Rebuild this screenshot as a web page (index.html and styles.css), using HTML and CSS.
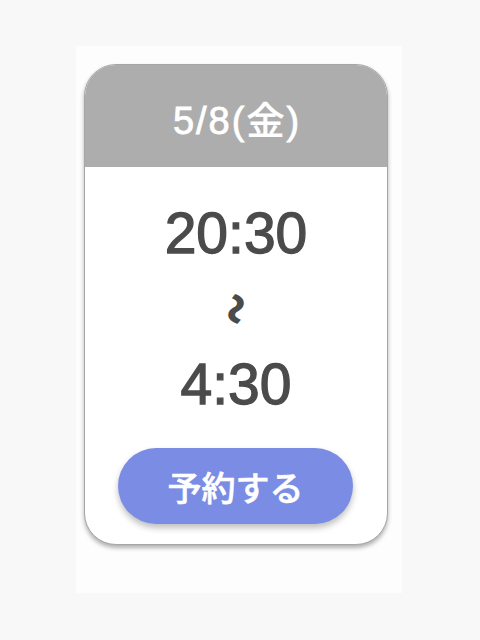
FILE: index.html
```html
<!DOCTYPE html>
<html lang="ja">
<head>
    <meta charset="UTF-8">
    <meta name="viewport" content="width=device-width, initial-scale=1.0">
    <link rel="stylesheet" href="styles.css">
    <title>予約</title>
</head>
<body>
    <!-- stage -->
    <div class="stage">
        <div class="card">
            <div class="cardHead">5/8(金)</div>
            <div class="cardBody">
                <div class="time">20:30</div>
                <div class="tilde"><span>〜</span></div>
                <div class="time">4:30</div>
                <button class="reserveButton">予約する</button>
            </div>
        </div>
    </div>
</body>
</html>
```

FILE: styles.css
```css
body {
    margin: 0;
    background-color: #f8f8f8;
    font-family: "Liberation Sans", "Noto Sans CJK JP", sans-serif;
}
.stage {
    width: 326px;
    height: 547px;
    margin: 46px 0 0 76px;
    padding-top: 18px;
    box-sizing: border-box;
    background-color: #fdfdfd;
}
.card {
    width: 304px;
    margin-left: 8px;
    box-sizing: border-box;
    border: 1px solid #a6a6a6;
    border-radius: 32px;
    background-color: #fff;
    overflow: hidden;
    box-shadow: 0 3px 4px rgba(0, 0, 0, 0.3);
}
.cardHead {
    height: 102px;
    background-color: #adadad;
    color: #fff;
    font-size: 38px;
    letter-spacing: 2px;
    -webkit-text-stroke: 0.8px #fff;
    display: flex;
    align-items: center;
    justify-content: center;
    padding: 3px 0 0 2px;
    box-sizing: border-box;
}
.cardBody {
    display: flex;
    flex-direction: column;
    align-items: center;
    padding: 38px 0 20px;
}
.time {
    font-size: 57px;
    line-height: 56px;
    color: #4b4b4b;
    -webkit-text-stroke: 1.3px #4b4b4b;
}
.tilde {
    height: 95px;
    display: flex;
    align-items: center;
    justify-content: center;
    padding-left: 6px;
}
.tilde span {
    display: inline-block;
    font-family: "Noto Sans CJK JP", sans-serif;
    font-weight: 900;
    font-size: 32px;
    line-height: 32px;
    color: #4b4b4b;
    transform: rotate(90deg) scaleY(1.4);
}
.reserveButton {
    width: 235px;
    height: 76px;
    margin-top: 36px;
    margin-right: 1px;
    border: none;
    border-radius: 38px;
    background-color: #7a8ce3;
    color: #fff;
    font-family: "Noto Sans CJK JP", sans-serif;
    font-size: 34px;
    font-weight: 500;
    -webkit-text-stroke: 0.6px #fff;
    box-shadow: 0 4px 6px rgba(0, 0, 0, 0.25);
    cursor: pointer;
}
```
